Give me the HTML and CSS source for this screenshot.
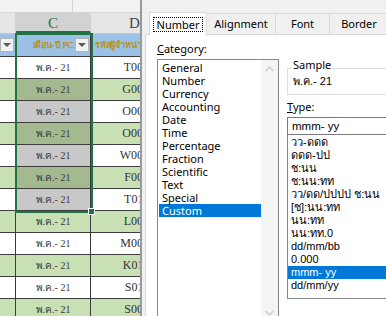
FILE: index.html
```html
<!DOCTYPE html>
<html>
<head>
<meta charset="utf-8">
<link rel="stylesheet" href="styles.css">
</head>
<body>
<div class="screen">
  <div class="sheet">
    <div class="topbar"><div class="tb-a"></div><div class="tb-b"></div></div>
    <div class="colhead">
      <div class="ch b"></div>
      <div class="ch c">C</div>
      <div class="ch d">D</div>
    </div>
    <div class="row hdr">
      <div class="cell b"><span class="filter"></span></div>
      <div class="cell c"><span class="htext">เดือน-ปี PC</span><span class="filter"></span></div>
      <div class="cell d"><span class="htext">รหัสผู้จำหน่าย</span></div>
    </div>
    <div class="row"><div class="cell b"></div><div class="cell c">พ.ค.- 21</div><div class="cell d">T0010</div></div>
    <div class="row g s"><div class="cell b"></div><div class="cell c">พ.ค.- 21</div><div class="cell d">G0010</div></div>
    <div class="row s"><div class="cell b"></div><div class="cell c">พ.ค.- 21</div><div class="cell d">O0010</div></div>
    <div class="row g s"><div class="cell b"></div><div class="cell c">พ.ค.- 21</div><div class="cell d">O0010</div></div>
    <div class="row s"><div class="cell b"></div><div class="cell c">พ.ค.- 21</div><div class="cell d">W0010</div></div>
    <div class="row g s"><div class="cell b"></div><div class="cell c">พ.ค.- 21</div><div class="cell d">F0010</div></div>
    <div class="row s"><div class="cell b"></div><div class="cell c">พ.ค.- 21</div><div class="cell d">T0110</div></div>
    <div class="row g"><div class="cell b"></div><div class="cell c">พ.ค.- 21</div><div class="cell d">L0010</div></div>
    <div class="row"><div class="cell b"></div><div class="cell c">พ.ค.- 21</div><div class="cell d">M0010</div></div>
    <div class="row g"><div class="cell b"></div><div class="cell c">พ.ค.- 21</div><div class="cell d">K0110</div></div>
    <div class="row"><div class="cell b"></div><div class="cell c">พ.ค.- 21</div><div class="cell d">S0110</div></div>
    <div class="row g"><div class="cell b"></div><div class="cell c">พ.ค.- 21</div><div class="cell d">S0010</div></div>
    <div class="selection"></div>
    <div class="handle"></div>
  </div>

  <div class="dialog">
    <div class="tabs">
      <div class="tab sel"><span class="focus">Number</span></div>
      <div class="tab t-align">Alignment</div>
      <div class="tab t-font">Font</div>
      <div class="tab t-border">Border</div>
    </div>
    <div class="page">
      <div class="left">
        <div class="lbl"><u>C</u>ategory:</div>
        <div class="listbox cat">
          <div class="items">
            <div class="item">General</div>
            <div class="item">Number</div>
            <div class="item">Currency</div>
            <div class="item">Accounting</div>
            <div class="item">Date</div>
            <div class="item">Time</div>
            <div class="item">Percentage</div>
            <div class="item">Fraction</div>
            <div class="item">Scientific</div>
            <div class="item">Text</div>
            <div class="item">Special</div>
            <div class="item hl">Custom</div>
          </div>
          <div class="scroll">
            <svg class="arrow" width="9" height="6" viewBox="0 0 9 6"><path d="M0.5 5 L4.5 1 L8.5 5" fill="none" stroke="#c8c8c8" stroke-width="1.2"/></svg>
            <svg class="arrow" width="9" height="6" viewBox="0 0 9 6"><path d="M0.5 1 L4.5 5 L8.5 1" fill="none" stroke="#c8c8c8" stroke-width="1.2"/></svg>
          </div>
        </div>
      </div>
      <div class="right">
        <div class="sample">
          <span class="legend">Sample</span>
          <div class="sample-val">พ.ค.- 21</div>
        </div>
        <div class="lbl type-lbl"><u>T</u>ype:</div>
        <div class="typebox">mmm- yy</div>
        <div class="listbox types">
          <div class="item">วว-ดดด</div>
          <div class="item">ดดด-ปป</div>
          <div class="item">ช:นน</div>
          <div class="item">ช:นน:ทท</div>
          <div class="item">วว/ดด/ปปปป ช:นน</div>
          <div class="item">[ช]:นน:ทท</div>
          <div class="item">นน:ทท</div>
          <div class="item">นน:ทท.0</div>
          <div class="item">dd/mm/bb</div>
          <div class="item">0.000</div>
          <div class="item hl">mmm- yy</div>
          <div class="item">dd/mm/yy</div>
        </div>
      </div>
    </div>
  </div>
</div>
</body>
</html>
```

FILE: styles.css
```css
* { box-sizing: border-box; margin: 0; padding: 0; }
html, body { margin: 0; width: 386px; height: 316px; overflow: hidden; background: #fff; }
.screen { display: flex; height: 316px; }

/* ---------- spreadsheet ---------- */
.sheet {
  width: 140px; flex: none; position: relative; overflow: hidden;
  font-family: "Liberation Serif", "Noto Sans", serif; color: #333;
}
.topbar { height: 13px; display: flex; background: #f3f3f3; border-bottom: 1px solid #d6d6d6; }
.tb-a { width: 73px; border-right: 1px solid #d6d6d6; }
.colhead { display: flex; height: 21px; background: #e6e6e6; border-bottom: 1px solid #c6c6c6; }
.ch { flex: none; display: flex; align-items: center; justify-content: center;
  font-size: 15px; color: #444; border-right: 1px solid #d0d0d0; }
.ch.b { width: 16px; }
.ch.c { width: 75px; background: #d2d2d2; color: #217346; border-bottom: 2px solid #217346; padding-top: 2px; }
.ch.d { width: 200px; justify-content: flex-start; padding-left: 38px; }

.row { display: flex; height: 22px; border-bottom: 1px solid #3c3c3c; background: #fff; }
.row.g { background: #c8e0b4; }
.row.hdr { height: 23px; background: #9bc2e6; }
.cell { flex: none; display: flex; align-items: center; border-right: 1px solid #3c3c3c;
  font-size: 11px; white-space: nowrap; overflow: hidden; }
.cell.b { width: 16px; }
.cell.c { width: 75px; justify-content: center; font-size: 10px; color: #3a3a3a; }
.cell.d { width: 66px; justify-content: flex-end; padding-right: 2px; font-size: 12px; border-right: none; }
.row.s .cell.c { background: #c8c8c8; }
.row.g.s .cell.c { background: #a5b991; }

.hdr .cell.c { justify-content: flex-end; gap: 2px; padding-right: 1px; }
.hdr .cell.d { justify-content: flex-start; padding-left: 4px; }
.htext { font-size: 9px; letter-spacing: -0.2px; color: #b8900c; -webkit-text-stroke: 0.25px #b8900c; flex: none; }
.filter {
  width: 14px; height: 14px; flex: none; background: #f2f2f2; border: 1px solid #b4b4b4;
  display: inline-flex; align-items: center; justify-content: center;
}
.filter::after {
  content: ""; border-left: 4px solid transparent; border-right: 4px solid transparent;
  border-top: 4px solid #5a5a5a;
}

.selection { position: absolute; left: 15px; top: 33px; width: 78px; height: 180px;
  border: 2px solid #217346; pointer-events: none; }
.handle { position: absolute; left: 88px; top: 208px; width: 7px; height: 7px;
  background: #217346; border: 1px solid #fff; }

/* ---------- dialog ---------- */
.dialog {
  flex: 1; background: #f0f0f0; border-left: 2px solid #9a9a9a;
  font-family: "Noto Sans", "Liberation Sans", sans-serif; font-size: 11px; color: #000;
  display: flex; flex-direction: column;
}
.tabs { display: flex; align-items: flex-end; height: 34px; padding-left: 8px; flex: none; }
.tab {
  height: 21px; line-height: 20px; text-align: center; background: #f0f0f0;
  border: 1px solid #d9d9d9; border-bottom: none; margin-left: -1px; flex: none;
}
.tab.sel { width: 58px; height: 23px; background: #fff; position: relative; z-index: 1;
  display: flex; align-items: center; justify-content: center; margin-bottom: -1px; }
.focus { border: 1px dotted #000; padding: 0 3px; line-height: 13px; }
.t-align { width: 70px; }
.t-font { width: 55px; }
.t-border { width: 60px; }

.page { flex: 1; background: #fff; border: 1px solid #d9d9d9; margin-left: 3px; border-right: none;
  display: flex; gap: 8px; padding: 7px 0 0 11px; }
.left { width: 122px; flex: none; display: flex; flex-direction: column; }
.lbl { line-height: 13px; height: 13px; }
.listbox { border: 1px solid #828790; background: #fff; }
.cat { margin-top: 4px; height: 262px; display: flex; }
.items { flex: 1; padding: 1px 0 0 1px; }
.item { line-height: 13px; height: 13px; padding-left: 3px; white-space: nowrap; }
.item.hl { background: #0078d7; color: #fff; }
.scroll { width: 17px; flex: none; background: #f4f4f4; display: flex; flex-direction: column;
  justify-content: space-between; align-items: center; padding: 6px 0 4px; }

.right { flex: 1; display: flex; flex-direction: column; min-width: 0; }
.sample { position: relative; margin-top: 26px; height: 27px; border: 1px solid #dcdcdc; border-right: none;
  padding: 6px 0 0 5px; }
.legend { position: absolute; top: -11px; left: 4px; background: #fff; padding: 0 1px; line-height: 13px; }
.sample-val { line-height: 13px; font-family: "Liberation Sans", sans-serif; font-size: 11px; }
.type-lbl { margin-top: 5px; }
.typebox { margin-top: 4px; height: 18px; border: 1px solid #7a7a7a; border-right: none; line-height: 16px;
  padding-left: 4px; font-family: "Liberation Sans", sans-serif; font-size: 11.5px; }
.types { height: 164px; border-right: none; border-top: none; padding-top: 1px;
  font-family: "Liberation Sans", sans-serif; font-size: 11px; }
.types .item { padding-left: 3px; }
```
